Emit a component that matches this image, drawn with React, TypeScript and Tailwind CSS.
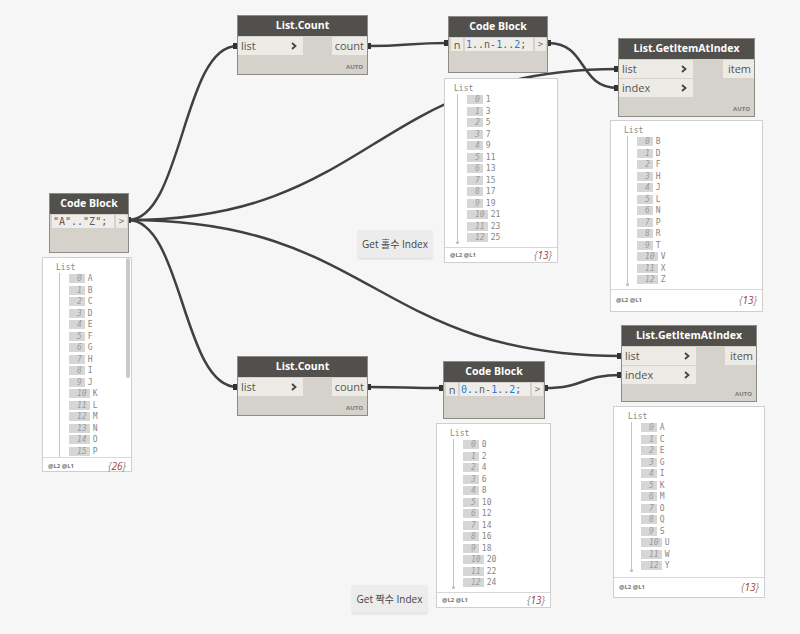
import type { ReactNode } from 'react';

const SANS = "font-['Open_Sans','Noto_Sans_CJK_KR',sans-serif]";
const MONO = "font-['DejaVu_Sans_Mono','Liberation_Mono',monospace]";

type Pt = [number, number];

const WIRES: [Pt, Pt][] = [
  [[128, 220], [237, 46]],
  [[128, 220], [618, 69]],
  [[128, 220], [237, 387]],
  [[128, 220], [621, 356]],
  [[368, 46], [448, 43]],
  [[548, 43], [618, 88]],
  [[368, 387], [443, 388]],
  [[545, 388], [621, 375]],
];

function wirePath([a, b]: [Pt, Pt]) {
  const d = Math.max(40, (b[0] - a[0]) * 0.5);
  return `M${a[0]} ${a[1]} C${a[0] + d} ${a[1]}, ${b[0] - d} ${b[1]}, ${b[0]} ${b[1]}`;
}

function Chevron() {
  return (
    <svg width="6" height="8" viewBox="0 0 6 8">
      <path d="M1 1 L4.5 4 L1 7" fill="none" stroke="#444" strokeWidth="1.8" />
    </svg>
  );
}

type Box = { x: number; y: number; w: number; h: number };

function Shell({ box, title, children }: { box: Box; title: string; children: ReactNode }) {
  return (
    <div
      className={`absolute flex flex-col border border-[#8e8b86] bg-[#d5d2cb] ${SANS}`}
      style={{ left: box.x, top: box.y, width: box.w, height: box.h }}
    >
      <div className="h-[20px] shrink-0 bg-[#52504d] text-white text-[10.5px] font-bold flex items-center justify-center">
        {title}
      </div>
      {children}
    </div>
  );
}

function InPort({ label, w }: { label: string; w: number }) {
  return (
    <div
      className="h-[18px] bg-[#edebe6] flex items-center justify-between pl-[3px] pr-[6px] text-[11px] text-[#555]"
      style={{ width: w }}
    >
      <span>{label}</span>
      <Chevron />
    </div>
  );
}

function OutPort({ label, w }: { label: string; w: number }) {
  return (
    <div
      className="h-[18px] bg-[#edebe6] flex items-center justify-end pr-[3px] text-[11px] text-[#555]"
      style={{ width: w }}
    >
      {label}
    </div>
  );
}

function Auto() {
  return <div className="mt-auto self-end pr-[4px] pb-[2px] text-[6px] font-bold text-[#777]">AUTO</div>;
}

function FuncNode({ box, title, inputs, output, inW, outW }: {
  box: Box; title: string; inputs: string[]; output: string; inW: number; outW: number;
}) {
  return (
    <Shell box={box} title={title}>
      <div className="mt-[1px] flex justify-between items-start">
        <div className="flex flex-col gap-[1px]">
          {inputs.map((p) => <InPort key={p} label={p} w={inW} />)}
        </div>
        <OutPort label={output} w={outW} />
      </div>
      <Auto />
    </Shell>
  );
}

function Code({ text }: { text: string }) {
  // numbers blue, rest grey
  return (
    <>
      {text.split(/(\d+)/).map((s, i) =>
        /^\d+$/.test(s) ? <span key={i} className="text-[#2a7ad8]">{s}</span> : <span key={i}>{s}</span>
      )}
    </>
  );
}

function CodeNode({ box, code, input }: { box: Box; code: string; input?: string }) {
  return (
    <Shell box={box} title="Code Block">
      <div className="mt-[1px] h-[13px] flex gap-[2px] pl-[2px] pr-[1px]">
        {input && (
          <div className="w-[12px] bg-[#edebe6] text-[11px] text-[#555] leading-[13px] text-center">{input}</div>
        )}
        <div className={`flex-1 bg-[#efede9] text-[10px] leading-[13px] text-[#5a5a5a] pl-[1px] whitespace-pre ${MONO}`}>
          <Code text={code} />
        </div>
        <div className={`w-[11px] bg-[#edebe6] text-[9px] leading-[13px] text-[#777] text-center ${MONO}`}>&gt;</div>
      </div>
    </Shell>
  );
}

type PreviewProps = Box & { items: string[]; count: number; pl: number; foot: number; scroll?: boolean };

function Preview({ x, y, w, h, items, count, pl, foot, scroll }: PreviewProps) {
  return (
    <div
      className={`absolute flex flex-col bg-white border border-[#cfcfcf] ${MONO}`}
      style={{ left: x, top: y, width: w, height: h }}
    >
      <div className="relative flex-1 pt-[4px]" style={{ paddingLeft: pl }}>
        <div className="text-[8px] leading-[11px] text-[#8a8a8a]">List</div>
        <div className="flex">
          <div className="w-[13px] flex flex-col items-start pl-[2px]">
            <div className="w-px flex-1 bg-[#c4c4c4] ml-px" />
            {!scroll && <div className="w-[3px] h-[3px] rounded-full bg-[#bdbdbd]" />}
          </div>
          <div className="flex flex-col">
            {items.map((v, i) => (
              <div key={i} className="h-[11.5px] flex items-center">
                <span className="h-[9px] leading-[9px] bg-[#d6d6d6] text-[#9c9c9c] italic text-[8px] pl-[8px] pr-[3px]">{i}</span>
                <span className="ml-[3px] text-[8px] leading-[9px] text-[#868686]">{v}</span>
              </div>
            ))}
          </div>
        </div>
        {scroll && <div className="absolute right-[1px] top-0 w-[4px] h-[120px] rounded-sm bg-[#c9c9c9]" />}
      </div>
      <div className="shrink-0 border-t border-[#d8d8d8] flex items-center justify-between px-[5px]" style={{ height: foot }}>
        <span className={`text-[6px] font-bold text-[#777] ${SANS}`}>@L2 @L1</span>
        <span className={`text-[10px] italic ${SANS}`}>
          <span className="text-[#888]">{'{'}</span>
          <span className="text-[#a33a36]">{count}</span>
          <span className="text-[#888]">{'}'}</span>
        </span>
      </div>
    </div>
  );
}

function Note({ x, y, w, h, text }: Box & { text: string }) {
  return (
    <div
      className={`absolute flex items-center justify-center bg-[#ececec] shadow-[0_1px_2px_rgba(0,0,0,0.12)] text-[10px] text-[#444] ${SANS}`}
      style={{ left: x, top: y, width: w, height: h }}
    >
      {text}
    </div>
  );
}

const AZ = Array.from({ length: 26 }, (_, i) => String.fromCharCode(65 + i));
const ODD = Array.from({ length: 13 }, (_, i) => String(2 * i + 1));
const EVEN = Array.from({ length: 13 }, (_, i) => String(2 * i));
const ODD_L = ODD.map((n) => AZ[Number(n)]);
const EVEN_L = EVEN.map((n) => AZ[Number(n)]);

export default function App() {
  return (
    <div className="relative w-[800px] h-[634px] overflow-hidden bg-[#f6f6f6]">
      <svg className="absolute inset-0" width="800" height="634">
        {WIRES.map((w, i) => (
          <path key={i} d={wirePath(w)} fill="none" stroke="#404040" strokeWidth="2.5" />
        ))}
        {WIRES.map(([a, b], i) => (
          <g key={'n' + i} fill="#333">
            <rect x={a[0] - 1} y={a[1] - 3} width="4" height="6" />
            <rect x={b[0] - 4} y={b[1] - 3} width="4" height="6" />
          </g>
        ))}
      </svg>

      <Preview x={42} y={257} w={90} h={215} items={AZ.slice(0, 16)} count={26} pl={13} foot={17} scroll />
      <Preview x={444} y={78} w={114} h={185} items={ODD} count={13} pl={9} foot={15} />
      <Preview x={610} y={120} w={153} h={192} items={ODD_L} count={13} pl={13} foot={22} />
      <Preview x={436} y={423} w={115} h={185} items={EVEN} count={13} pl={13} foot={15} />
      <Preview x={613} y={406} w={152} h={192} items={EVEN_L} count={13} pl={14} foot={20} />

      <CodeNode box={{ x: 49, y: 193, w: 80, h: 60 }} code={'"A".."Z";'} />
      <CodeNode box={{ x: 448, y: 16, w: 100, h: 57 }} code="1..n-1..2;" input="n" />
      <CodeNode box={{ x: 443, y: 361, w: 102, h: 58 }} code="0..n-1..2;" input="n" />

      <FuncNode box={{ x: 237, y: 15, w: 131, h: 60 }} title="List.Count" inputs={['list']} output="count" inW={65} outW={35} />
      <FuncNode box={{ x: 237, y: 356, w: 131, h: 60 }} title="List.Count" inputs={['list']} output="count" inW={65} outW={35} />
      <FuncNode box={{ x: 618, y: 38, w: 137, h: 79 }} title="List.GetItemAtIndex" inputs={['list', 'index']} output="item" inW={74} outW={31} />
      <FuncNode box={{ x: 621, y: 325, w: 136, h: 77 }} title="List.GetItemAtIndex" inputs={['list', 'index']} output="item" inW={74} outW={31} />

      <Note x={358} y={230} w={74} h={28} text="Get 홀수 Index" />
      <Note x={352} y={585} w={75} h={28} text="Get 짝수 Index" />
    </div>
  );
}
